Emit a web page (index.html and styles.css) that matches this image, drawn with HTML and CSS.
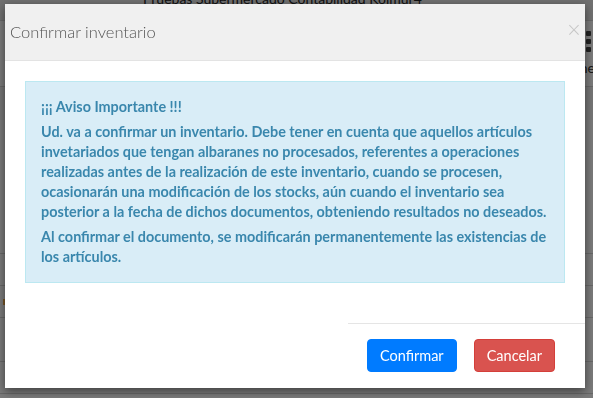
FILE: index.html
```html
<!DOCTYPE html>
<html lang="es">
<head>
  <meta charset="UTF-8" />
  <meta name="viewport" content="width=device-width, initial-scale=1" />
  <title>Confirmar inventario</title>
  <link rel="stylesheet" href="styles.css">
</head>
<body>

  <div class="page">
    <div class="page-top">
      <h1 class="page-title">Pruebas Supermercado Contabilidad Kolmur4</h1>
    </div>
    <div class="toolbar">
      <span class="grid-icon"><i></i><i></i><i></i></span>
      <span class="toolbar-label">ne</span>
    </div>
    <div class="band"></div>
    <div class="filler"></div>
    <div class="row"></div>
    <div class="row"><span class="mark"></span></div>
    <div class="row tall"></div>
    <div class="row"></div>
  </div>

  <div class="backdrop"></div>

  <div class="modal" role="dialog" aria-labelledby="modal-title">
    <div class="modal-header">
      <h4 class="modal-title" id="modal-title">Confirmar inventario</h4>
      <button class="close" aria-label="Cerrar">&times;</button>
    </div>

    <div class="modal-body">
      <div class="alert">
        <p>¡¡¡ Aviso Importante !!!</p>
        <p>Ud. va a confirmar un inventario. Debe tener en cuenta que aquellos artículos invetariados que tengan albaranes no procesados, referentes a operaciones realizadas antes de la realización de este inventario, cuando se procesen, ocasionarán una modificación de los stocks, aún cuando el inventario sea posterior a la fecha de dichos documentos, obteniendo resultados no deseados.</p>
        <p>Al confirmar el documento, se modificarán permanentemente las existencias de los artículos.</p>
      </div>
    </div>

    <div class="modal-footer">
      <div class="actions">
        <button class="btn btn-primary">Confirmar</button>
        <button class="btn btn-danger">Cancelar</button>
      </div>
    </div>
  </div>

</body>
</html>
```

FILE: styles.css
```css
html, body {
  margin: 0;
  height: 100%;
  overflow: hidden;
}
body {
  background: #f6f6f6;
  font-family: Lato, "Open Sans", sans-serif;
  color: #333;
}

/* page behind the dialog */
.page {
  width: 593px;
}
.page-top {
  height: 20px;
  background: #e2e2e2;
  border-bottom: 1px solid #d0d0d0;
}
.page-title {
  margin: 0;
  padding-left: 143px;
  font-size: 14px;
  font-weight: 400;
  line-height: 14px;
  position: relative;
  top: -8px;
  color: #222;
  white-space: nowrap;
}
.toolbar {
  height: 66px;
  border-bottom: 1px solid #d0d0d0;
  display: flex;
  flex-direction: column;
  align-items: flex-end;
  padding-top: 10px;
  box-sizing: border-box;
  overflow: hidden;
}
.grid-icon {
  display: flex;
  flex-direction: column;
  gap: 3px;
  margin-right: 2px;
}
.grid-icon i {
  display: block;
  width: 5px;
  height: 5px;
  background: #444;
  border-radius: 1px;
}
.toolbar-label {
  margin-top: 8px;
  margin-right: -2px;
  font-size: 14px;
  line-height: 16px;
  color: #333;
}
.band {
  height: 33px;
  background: #ececec;
}
.filler {
  height: 133px;
  border-bottom: 1px solid #d0d0d0;
}
.row {
  height: 31px;
  border-bottom: 1px solid #d0d0d0;
  position: relative;
}
.row.tall {
  height: 43px;
}
.mark {
  position: absolute;
  left: 3px;
  top: 13px;
  width: 3px;
  height: 6px;
  background: #f0ad4e;
}
.backdrop {
  position: fixed;
  inset: 0;
  background: rgba(0, 0, 0, 0.5);
}

/* dialog */
.modal {
  position: absolute;
  left: 5px;
  top: 4px;
  width: 580px;
  height: 384px;
  background: #fff;
  box-shadow: 0 3px 9px rgba(0, 0, 0, 0.5);
  display: flex;
  flex-direction: column;
}
.modal-header {
  height: 56px;
  background: #f0f0f0;
  border-bottom: 1px solid #e3e3e3;
  display: flex;
  align-items: center;
  justify-content: space-between;
  padding: 0 3px 0 5px;
}
.modal-title {
  margin: 0;
  font-size: 16.5px;
  font-weight: 300;
  color: #555;
}
.close {
  background: transparent;
  border: none;
  padding: 0 0 5px;
  font-family: "DejaVu Sans", sans-serif;
  font-size: 19px;
  font-weight: 300;
  line-height: 1;
  color: #c6c6c6;
  cursor: pointer;
}
.modal-body {
  padding: 20px 20px 40px;
}
.alert {
  background: #d9edf7;
  border: 1px solid #bce8f1;
  color: #3a87ad;
  padding: 15px;
  font-size: 14.4px;
  font-weight: 700;
  line-height: 20px;
}
.alert p {
  margin: 0 0 5px;
}
.alert p:last-child {
  margin-bottom: 0;
}
.modal-footer {
  display: flex;
  justify-content: flex-end;
}
.actions {
  width: 237px;
  border-top: 1px solid #e5e5e5;
  display: flex;
  justify-content: flex-end;
  gap: 17px;
  padding: 15px 30px 16px 0;
  box-sizing: border-box;
}
.btn {
  font-family: Lato, sans-serif;
  font-size: 14.5px;
  line-height: 19px;
  padding: 6px 12px;
  border: 1px solid transparent;
  border-radius: 4px;
  color: #fff;
  cursor: pointer;
}
.btn-primary {
  background: #007bff;
  border-color: #007bff;
}
.btn-danger {
  background: #d9534f;
  border-color: #d43f3a;
}
```
